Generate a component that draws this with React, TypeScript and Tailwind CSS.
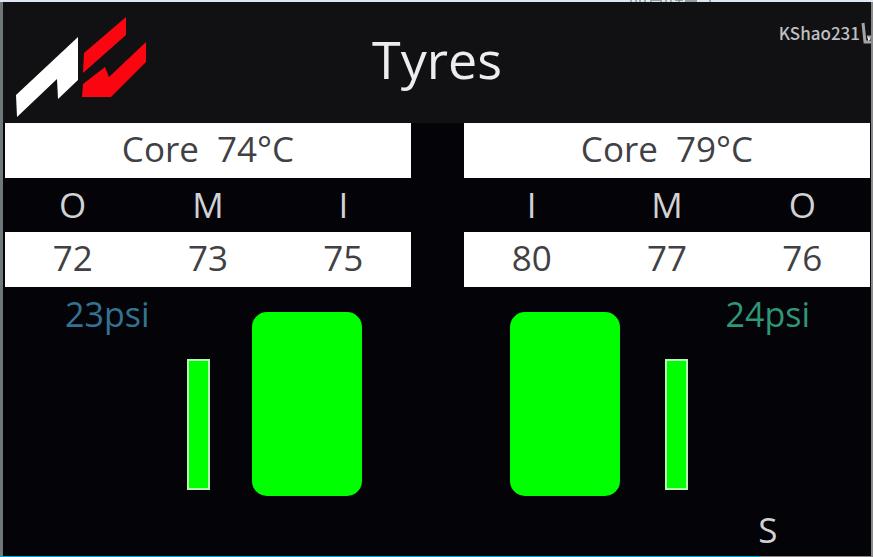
type Reading = { zone: string; temp: number };

function TempTable({ core, readings }: { core: number; readings: Reading[] }) {
  return (
    <table className="w-full table-fixed border-collapse text-center text-[35px] leading-[52px]">
      <thead>
        <tr className="h-[55px] bg-white text-[#414145]">
          <th colSpan={3} scope="colgroup" className="p-0 pb-[3px] font-normal whitespace-pre">
            {`Core  ${core}°C`}
          </th>
        </tr>
        <tr className="h-[54px] text-[#d2d2d4]">
          {readings.map((r) => (
            <th key={r.zone} scope="col" className="p-0 font-normal">
              {r.zone}
            </th>
          ))}
        </tr>
      </thead>
      <tbody>
        <tr className="h-[55px] bg-white text-[#414145]">
          {readings.map((r) => (
            <td key={r.zone} className="p-0 pb-[3px]">
              {r.temp}
            </td>
          ))}
        </tr>
      </tbody>
    </table>
  );
}

function WearBar() {
  return <div className="mt-[72px] h-[131px] w-[23px] shrink-0 border-2 border-[#b4f8b4] bg-[#00ff00]" />;
}

function Tyre() {
  return <div className="mt-[25px] h-[184px] w-[110px] shrink-0 rounded-[15px] bg-[#00ff00]" />;
}

function Logo() {
  return (
    <svg viewBox="0 0 150 120" className="h-[120px] w-[150px] shrink-0" role="img" aria-label="Assetto Corsa">
      <path d="M16 95 L78 37 L78 80 L58 99 L57 79 L17 117 Z" fill="#fff" />
      <path d="M84 53 L126 17 L126 35 L83 73 Z" fill="#fa0510" />
      <path d="M83 84 L105 67 L109 77 L146 42 L146 62 L111 97 L82 97 Z" fill="#fa0510" />
    </svg>
  );
}

export default function App() {
  return (
    <div
      className="flex min-h-screen flex-col bg-[#dfe7f0] pt-[2px]"
      style={{ fontFamily: '"Open Sans", "Noto Sans", sans-serif' }}
    >
      <main className="relative flex grow flex-col border-r-2 border-l-[3px] border-r-[#898b8d] border-l-[#70777b] bg-[#040307] pr-px pl-[2px]">
        <svg viewBox="0 0 90 2" className="absolute -top-[2px] left-[624px] h-[2px] w-[90px]" aria-hidden="true">
          <path
            d="M4 0v2M9 0v2M13 0v2M18 0v2M23 0h12M24 1v1M34 1v1M39 0v2M44 0v2M48 0h8M52 0v2M58 1h12M83 0v2"
            stroke="#80868d"
            strokeWidth="1.3"
          />
        </svg>
        <header className="-mr-px -ml-[2px] grid h-[121px] grid-cols-[1fr_auto_1fr] bg-[#111113]">
          <div className="-mt-[2px] -ml-[3px]">
            <Logo />
          </div>
          <h1 className="self-center pb-[8px] text-[52px] leading-[60px] text-[#ededee]">Tyres</h1>
          <div
            className="flex items-start justify-end overflow-hidden pt-[17px] text-[17px] leading-[28px] font-medium text-[#bfbfc1]"
            style={{ fontFamily: '"Noto Sans CJK SC", sans-serif' }}
          >
            <span>KShao231</span>
            <svg viewBox="0 0 11 28" className="h-[28px] w-[11px]" aria-hidden="true">
              <path d="M3 4L5 23H11M7 18H11" fill="none" stroke="#a5a5a7" strokeWidth="3" />
              <path d="M8 18L11 20L8 22Z" fill="#ededee" />
            </svg>
          </div>
        </header>

        <div className="grid grow grid-cols-2 gap-x-[53px]">
          <section className="flex flex-col" aria-label="Left tyre">
            <TempTable
              core={74}
              readings={[
                { zone: "O", temp: 72 },
                { zone: "M", temp: 73 },
                { zone: "I", temp: 75 },
              ]}
            />
            <div className="flex grow justify-end pr-[49px]">
              <p className="mr-auto pl-[60px] text-[34px] leading-[54px] text-[#327394]">23psi</p>
              <WearBar />
              <div className="w-[42px]" />
              <Tyre />
            </div>
          </section>

          <section className="flex flex-col" aria-label="Right tyre">
            <TempTable
              core={79}
              readings={[
                { zone: "I", temp: 80 },
                { zone: "M", temp: 77 },
                { zone: "O", temp: 76 },
              ]}
            />
            <div className="flex grow pl-[46px]">
              <Tyre />
              <div className="w-[45px]" />
              <WearBar />
              <div className="ml-auto flex flex-col justify-between pr-[60px]">
                <p className="text-[34px] leading-[54px] text-[#2f9678]">24psi</p>
                <p className="text-center text-[35px] leading-[52px] text-[#d2d2d4]">S</p>
              </div>
            </div>
          </section>
        </div>
      </main>
      <div className="h-px bg-[#8a8587]">
        <div className="h-px w-[87%] bg-[#00a8d8]" />
      </div>
    </div>
  );
}
